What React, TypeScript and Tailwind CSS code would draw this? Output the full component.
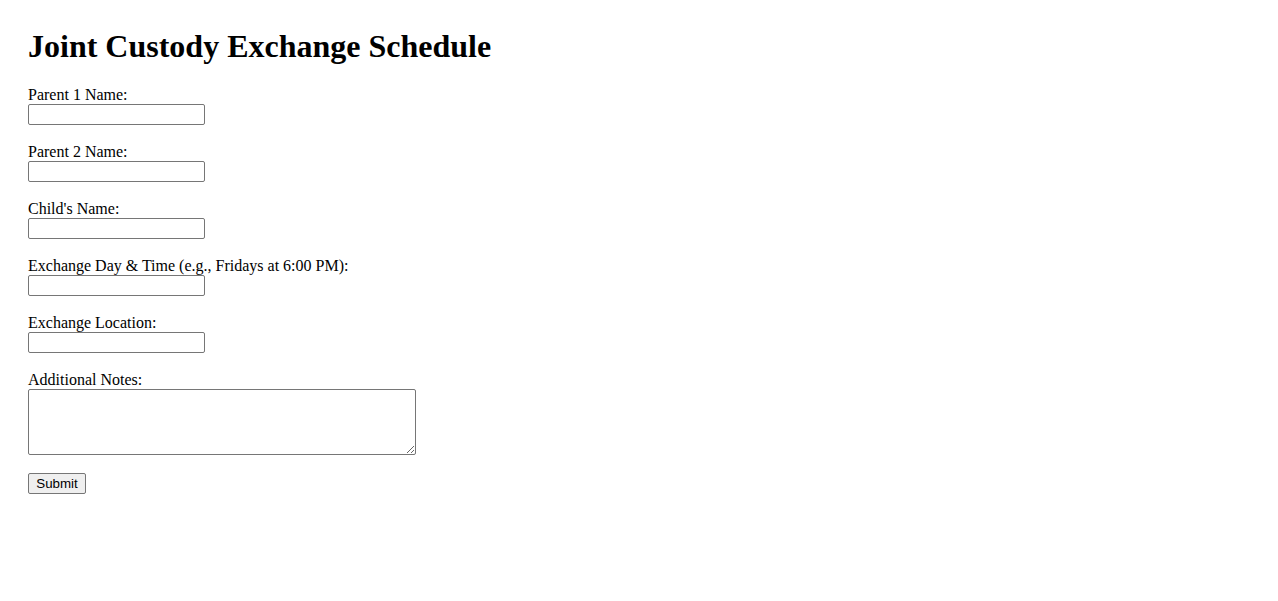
import React from "react";

const fields = [
  "Parent 1 Name:",
  "Parent 2 Name:",
  "Child's Name:",
  "Exchange Day & Time (e.g., Fridays at 6:00 PM):",
  "Exchange Location:",
];

const App: React.FC = () => {
  return (
    <div className="min-h-screen bg-white pt-[28px] pl-[28px] text-black font-['Liberation_Serif','Times_New_Roman',serif]">
      <h1 className="text-[32px] font-bold leading-[37px] mb-[21px]">
        Joint Custody Exchange Schedule
      </h1>
      <form className="flex flex-col items-start" onSubmit={(e) => e.preventDefault()}>
        {fields.map((label) => (
          <div key={label} className="flex flex-col items-start mb-[18px]">
            <label className="text-[16px] leading-[18px]">{label}</label>
            <input
              type="text"
              className="w-[177px] h-[21px] border border-[#767676] rounded-[2px] bg-white px-[2px] text-[13.33px] font-['Liberation_Sans',Arial,sans-serif]"
            />
          </div>
        ))}
        <div className="flex flex-col items-start mb-[18px]">
          <label className="text-[16px] leading-[18px]">Additional Notes:</label>
          <textarea className="w-[388px] h-[66px] border border-[#767676] rounded-[2px] bg-white px-[2px] text-[13.33px] font-['Liberation_Mono',monospace] resize" />
        </div>
        <button
          type="submit"
          className="w-[58px] h-[21px] border border-[#767676] rounded-[2px] bg-[#efefef] text-[13.33px] leading-none font-['Liberation_Sans',Arial,sans-serif]"
        >
          Submit
        </button>
      </form>
    </div>
  );
};

export default App;
